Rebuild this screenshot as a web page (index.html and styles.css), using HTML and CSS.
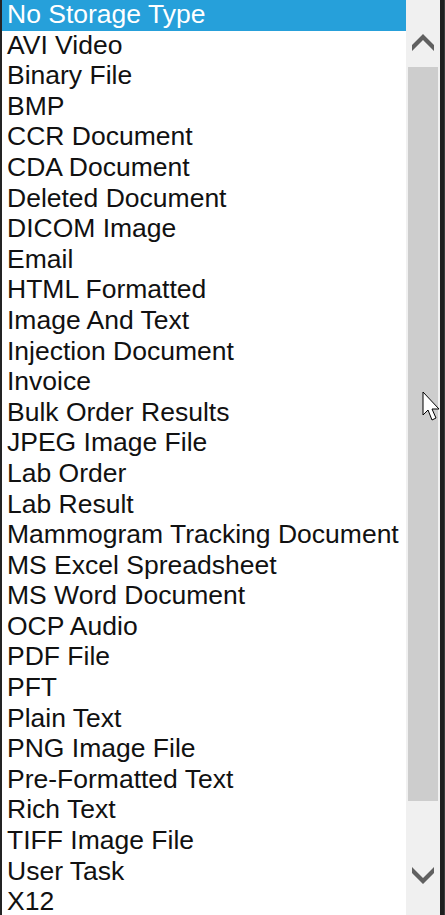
FILE: index.html
```html
<!DOCTYPE html>
<html>
<head>
<meta charset="utf-8">
<link rel="stylesheet" href="styles.css">
</head>
<body>
<div class="frame">
  <div class="edge-left"></div>
  <ul class="list">
    <li class="item selected">No Storage Type</li>
    <li class="item">AVI Video</li>
    <li class="item">Binary File</li>
    <li class="item">BMP</li>
    <li class="item">CCR Document</li>
    <li class="item">CDA Document</li>
    <li class="item">Deleted Document</li>
    <li class="item">DICOM Image</li>
    <li class="item">Email</li>
    <li class="item">HTML Formatted</li>
    <li class="item">Image And Text</li>
    <li class="item">Injection Document</li>
    <li class="item">Invoice</li>
    <li class="item">Bulk Order Results</li>
    <li class="item">JPEG Image File</li>
    <li class="item">Lab Order</li>
    <li class="item">Lab Result</li>
    <li class="item">Mammogram Tracking Document</li>
    <li class="item">MS Excel Spreadsheet</li>
    <li class="item">MS Word Document</li>
    <li class="item">OCP Audio</li>
    <li class="item">PDF File</li>
    <li class="item">PFT</li>
    <li class="item">Plain Text</li>
    <li class="item">PNG Image File</li>
    <li class="item">Pre-Formatted Text</li>
    <li class="item">Rich Text</li>
    <li class="item">TIFF Image File</li>
    <li class="item">User Task</li>
    <li class="item">X12</li>
  </ul>
  <div class="scrollbar">
    <div class="arrow">
      <svg width="22" height="19" viewBox="0 0 22 19"><path d="M0 13 L11 2 L22 13 L22 19 L11 8 L0 19 Z" fill="#606060"/></svg>
    </div>
    <div class="thumb"></div>
    <div class="arrow">
      <svg width="22" height="19" viewBox="0 0 22 19"><path d="M0 0 L11 11 L22 0 L22 6 L11 17 L0 6 Z" fill="#606060"/></svg>
    </div>
  </div>
  <div class="edge-right"></div>
  <svg class="cursor" width="20" height="32" viewBox="0 0 20 32"><path d="M1 1 L1 24 L6 19 L10 29 L14 27 L10 18 L17 18 Z" fill="#fff" stroke="#000" stroke-width="1"/></svg>
</div>
</body>
</html>
```

FILE: styles.css
```css
html, body {
  margin: 0;
  padding: 0;
  background: #fff;
}
.frame {
  position: relative;
  display: flex;
  width: 445px;
  height: 915px;
  overflow: hidden;
}
.edge-left {
  width: 2px;
  background: #232323;
  flex: none;
}
.list {
  list-style: none;
  margin: 0;
  padding: 0;
  width: 404px;
  flex: none;
  background: #fff;
  font-family: "Liberation Sans", Arial, sans-serif;
  font-size: 26.5px;
  color: #111;
}
.item {
  height: 30.6px;
  line-height: 29px;
  padding-left: 5px;
  white-space: nowrap;
}
.item.selected {
  background: #26a0da;
  color: #fff;
}
.scrollbar {
  width: 34px;
  flex: none;
  background: #f0f0f0;
  display: flex;
  flex-direction: column;
  align-items: center;
}
.arrow {
  height: 67px;
  width: 100%;
  display: flex;
  align-items: center;
  justify-content: center;
}
.scrollbar .arrow:first-child {
  align-items: flex-start;
  padding-top: 32px;
  box-sizing: border-box;
}
.scrollbar .arrow:last-child {
  height: 114px;
  align-items: flex-start;
  padding-top: 66px;
  box-sizing: border-box;
}
.thumb {
  width: 30px;
  height: 734px;
  background: #cdcdcd;
}
.edge-right {
  width: 5px;
  flex: none;
  background: #1e1e1e;
  border-right: 1px solid #3a3a3a;
  box-sizing: border-box;
}
.cursor {
  position: absolute;
  left: 422px;
  top: 391px;
}
```
